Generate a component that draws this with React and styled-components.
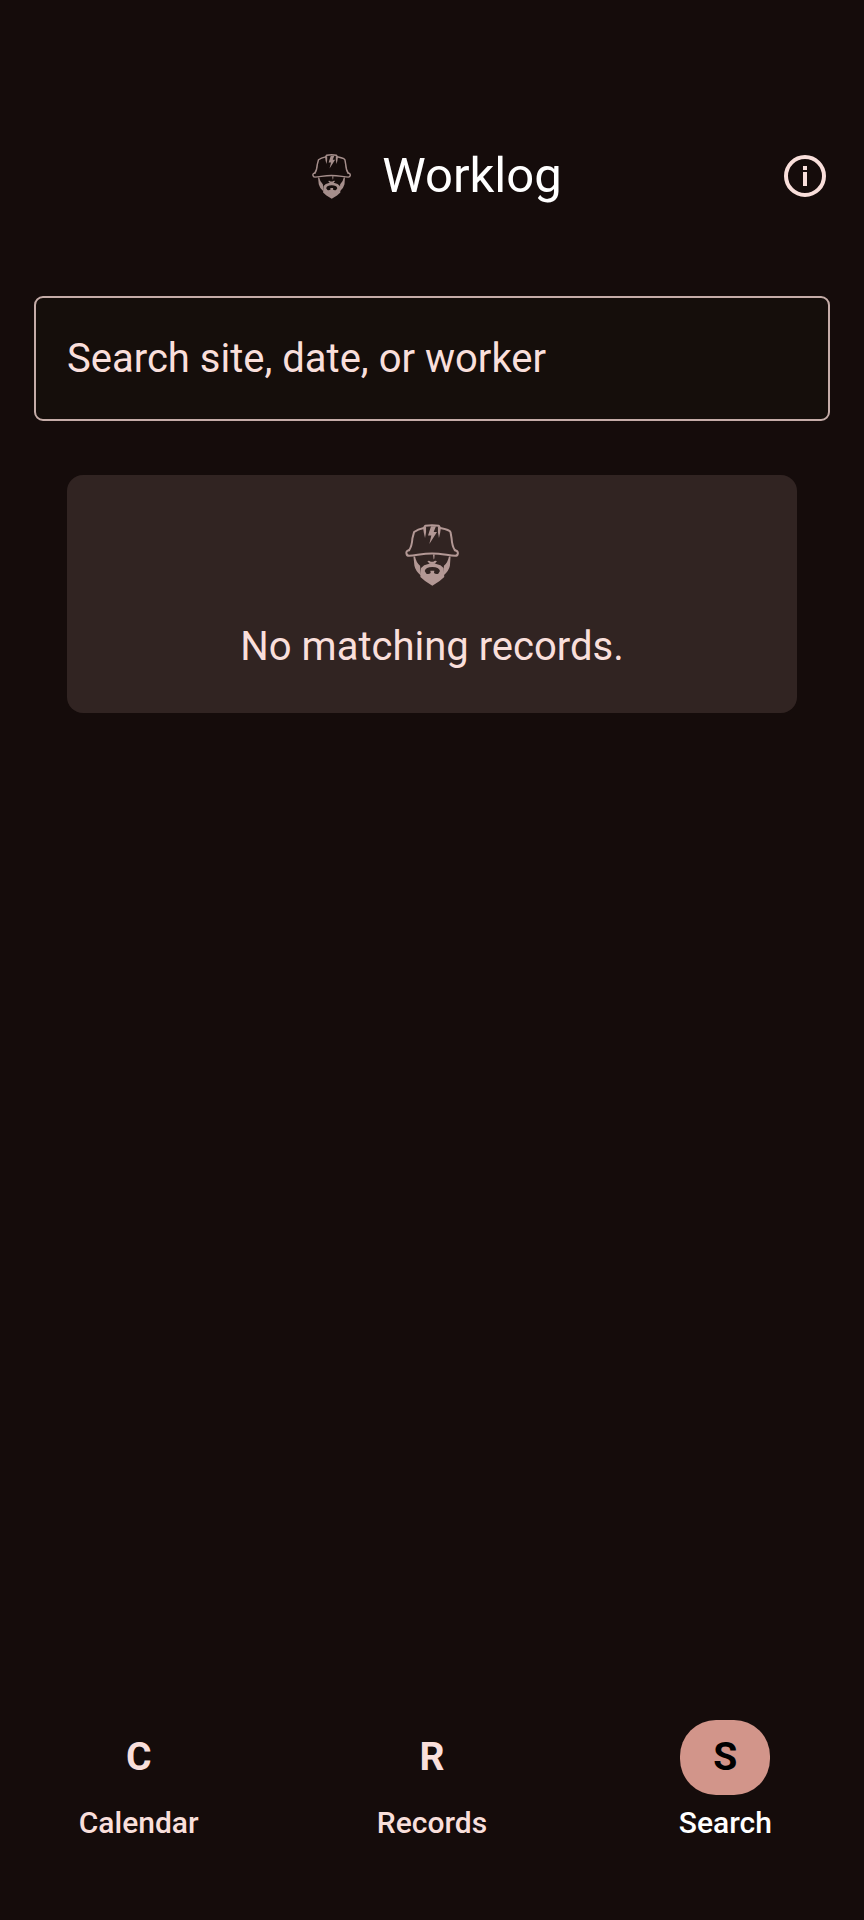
import React, { useState } from 'react'
import styled, { createGlobalStyle } from 'styled-components'

const tabs = [
  { id: 'calendar', letter: 'C', label: 'Calendar' },
  { id: 'records', letter: 'R', label: 'Records' },
  { id: 'search', letter: 'S', label: 'Search' },
]

function WorkerIcon({ width, height }) {
  return (
    <svg width={width} height={height} viewBox='31 25 162 187' aria-hidden='true'>
      <g
        fill='none'
        stroke='currentColor'
        strokeWidth='6'
        strokeLinejoin='round'
        strokeLinecap='round'
      >
        {/* Helmet shell */}
        <path d='M43 104 C50 94 52 82 53 68 L58 49 Q69 41 87 37 L92 30 Q112 27 132 30 L137 37 C155 41 166 43 168 50 L171 68 C172 82 174 94 181 104' />
        {/* Brim */}
        <path d='M43 104 Q33 106 35 114 Q36 121 43 121 C64 120 83 114 112 114 C141 114 161 120 182 121 Q189 121 190 114 Q191 106 181 104' />
      </g>
      <g fill='currentColor'>
        {/* Helmet ridges */}
        <path d='M85 36 L94 33 L94 50 L91 67 Q87 52 85 36 Z' />
        <path d='M139 36 L130 33 L130 50 L133 67 Q137 52 139 36 Z' />
        <path d='M109 32 L124 32 L117 49 L127 49 L104 85 L110 60 L100 60 Z' />
        {/* Sideburns */}
        <path d='M56 123 L61 123 Q64 141 76 151 L79 181 Q62 167 59 151 Z' />
        <path d='M168 123 L163 123 Q160 141 148 151 L146 181 Q163 167 166 151 Z' />
        {/* Nose */}
        <path d='M115 117 L120 117 L119 129 L117 132 Z' />
        <path d='M98 137 Q104 134 108 139 L116 139 Q121 134 127 137 L120 145 L105 145 Z' />
        {/* Beard with the mouth cut out */}
        <path
          fillRule='evenodd'
          d='M79 158 Q87 148 101 146 Q113 140 125 146 Q139 148 147 158 L149 185 L135 197 L113 211 L91 197 L77 185 Z M90 167 Q93 155 113 155 Q133 155 136 167 L131 175 Q124 178 118 173 L119 166 L107 166 L108 173 Q102 178 95 175 Z'
        />
      </g>
    </svg>
  )
}

function InfoIcon() {
  return (
    <svg width='42' height='42' viewBox='0 0 42 42' aria-hidden='true'>
      <circle cx='21' cy='21' r='19' fill='none' stroke='currentColor' strokeWidth='4' />
      <path fill='currentColor' d='M19 11h4v4h-4zM19 17h4v14h-4z' />
    </svg>
  )
}

function App() {
  const [activeTab, setActiveTab] = useState('search')
  const [query, setQuery] = useState('')

  return (
    <Page>
      <GlobalStyle />
      <Header>
        <Brand>
          <Logo>
            <WorkerIcon width={39} height={45} />
          </Logo>
          <Title>Worklog</Title>
        </Brand>
        <InfoButton type='button' aria-label='About'>
          <InfoIcon />
        </InfoButton>
      </Header>
      <Main>
        <SearchInput
          type='text'
          aria-label='Search site, date, or worker'
          placeholder='Search site, date, or worker'
          value={query}
          onChange={(e) => setQuery(e.target.value)}
        />
        <EmptyCard>
          <WorkerIcon width={54} height={62} />
          <p>No matching records.</p>
        </EmptyCard>
      </Main>
      <Nav>
        {tabs.map((tab) => (
          <NavButton
            key={tab.id}
            type='button'
            $active={tab.id === activeTab}
            aria-current={tab.id === activeTab ? 'page' : undefined}
            onClick={() => setActiveTab(tab.id)}
          >
            <Pill $active={tab.id === activeTab}>{tab.letter}</Pill>
            <span>{tab.label}</span>
          </NavButton>
        ))}
      </Nav>
    </Page>
  )
}

export default App

const GlobalStyle = createGlobalStyle`
  * {
    box-sizing: border-box;
  }
  body {
    margin: 0;
    background-color: #150c0b;
    font-family: Roboto, 'Liberation Sans', sans-serif;
  }
  button,
  input {
    font-family: inherit;
  }
`

const Page = styled.div`
  min-height: 100vh;
  padding-top: 149px;
  display: flex;
  flex-direction: column;
  color: #f9dfdb;
`

const Header = styled.header`
  display: grid;
  grid-template-columns: 1fr auto 1fr;
  align-items: center;
  padding: 0 38px;
`

const Brand = styled.div`
  grid-column: 2;
  display: flex;
  align-items: center;
  gap: 24px;
`

const Logo = styled.div`
  width: 56px;
  display: flex;
  justify-content: flex-end;
  padding-right: 7px;
  color: #a58e8b;
`

const Title = styled.h1`
  margin: 0;
  font-size: 49px;
  font-weight: 400;
  line-height: 54px;
  color: white;
`

const InfoButton = styled.button`
  justify-self: end;
  display: flex;
  padding: 0;
  border: none;
  background: none;
  color: #f9dfdb;
  cursor: pointer;
`

const Main = styled.main`
  flex: 1;
  display: flex;
  flex-direction: column;
  gap: 54px;
  padding: 93px 34px 0;
`

const SearchInput = styled.input`
  width: 100%;
  height: 125px;
  padding: 0 31px;
  border: 2px solid #c5aca8;
  border-radius: 9px;
  outline: none;
  background-color: #150e0b;
  font-size: 40px;
  color: #f9dfdb;
  &::placeholder {
    color: #f9dfdb;
    opacity: 1;
  }
`

const EmptyCard = styled.section`
  margin: 0 33px;
  padding: 49px 32px 42px;
  display: flex;
  flex-direction: column;
  align-items: center;
  gap: 37px;
  border-radius: 16px;
  background-color: #312422;
  color: #b39895;
  p {
    margin: 0;
    font-size: 40px;
    line-height: 48px;
    color: #f9dfdb;
  }
`

const Nav = styled.nav`
  display: grid;
  grid-template-columns: repeat(3, 1fr);
  gap: 16px;
  padding-bottom: 80px;
`

const NavButton = styled.button`
  display: flex;
  flex-direction: column;
  align-items: center;
  gap: 11px;
  padding: 0;
  border: none;
  background: none;
  font-size: 30px;
  font-weight: 500;
  line-height: 34px;
  color: ${(props) => (props.$active ? 'white' : '#f9dfdb')};
  cursor: pointer;
`

const Pill = styled.span`
  padding: 14px 33px;
  border-radius: 36px;
  font-size: 39px;
  font-weight: 700;
  line-height: 47px;
  background-color: ${(props) => (props.$active ? '#d2958a' : 'transparent')};
  color: ${(props) => (props.$active ? 'black' : '#f9dfdb')};
`
